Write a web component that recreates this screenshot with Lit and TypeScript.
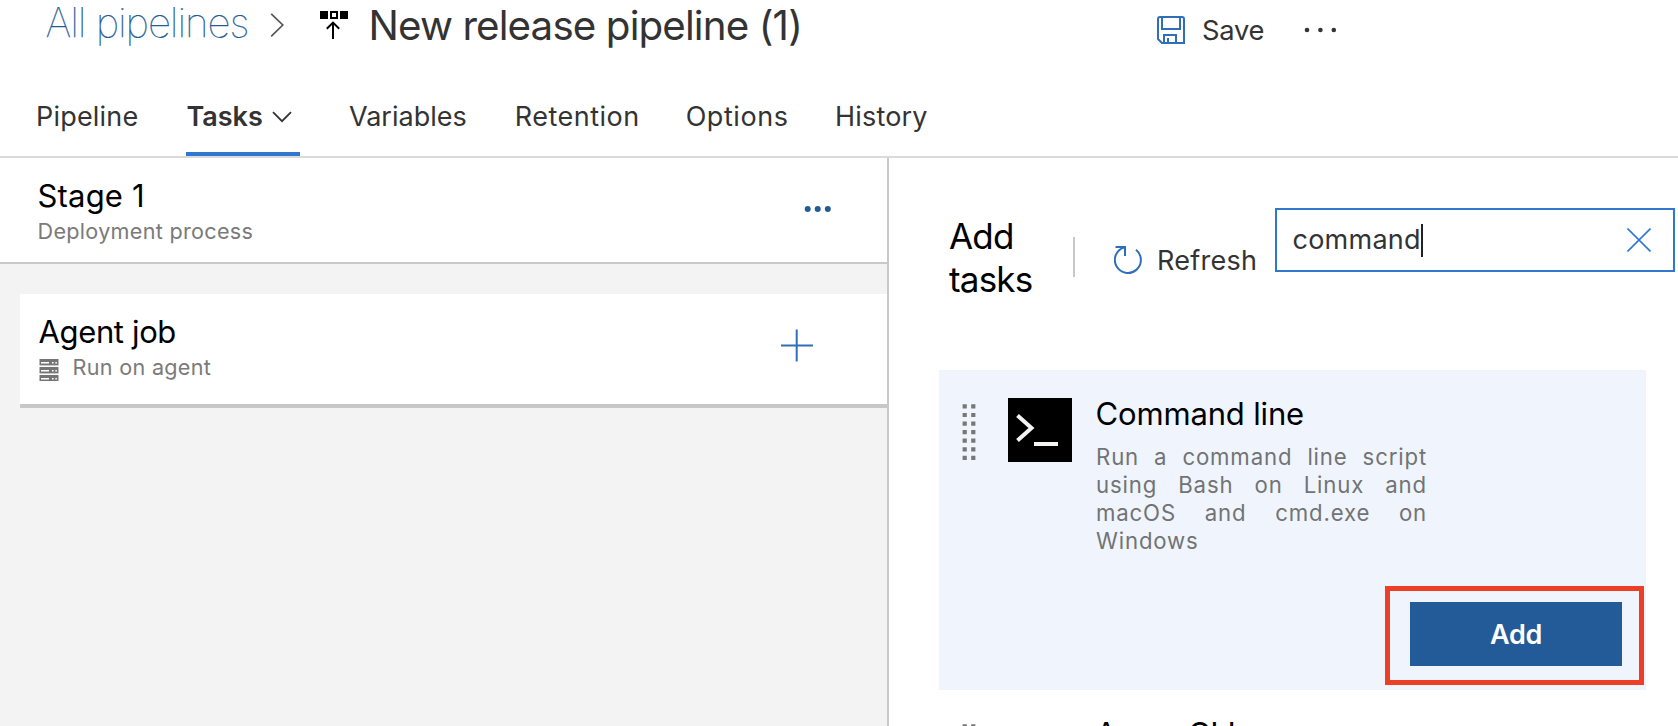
import { LitElement, html, css, svg } from "lit";
import { customElement } from "lit/decorators.js";

const TABS = [
  { id: "pipeline", label: "Pipeline" },
  { id: "tasks", label: "Tasks", active: true },
  { id: "variables", label: "Variables" },
  { id: "retention", label: "Retention" },
  { id: "options", label: "Options" },
  { id: "history", label: "History" },
];

@customElement("pipeline-header")
class PipelineHeader extends LitElement {
  static styles = css`
    :host { display: block; height: 156px; border-bottom: 2px solid #dadada; color: #333; }
    svg { display: block; flex: none; }
    .top { display: flex; align-items: flex-start; height: 88px; padding-left: 45.5px; white-space: nowrap; }
    .crumb { width: 203.5px; font-size: 40.3px; line-height: 46px; font-weight: 100; letter-spacing: -1.09px; color: #235b98; -webkit-text-stroke: 0.25px #235b98; }
    .sep { margin: 13px 0 0 21px; }
    .logo { margin: 10px 0 0 36px; }
    .title { margin: 0 0 0 19.5px; width: 788px; font-size: 40.3px; line-height: 51px; font-weight: 400; letter-spacing: -0.87px; }
    .save { display: flex; gap: 17.5px; font-size: 27.3px; line-height: 61.5px; letter-spacing: -0.25px; }
    .save svg { margin-top: 16px; }
    .more { margin: 27px 0 0 40px; }
    .tabs { display: flex; gap: 48px; padding-left: 36px; height: 68px; }
    .tab { box-sizing: border-box; display: flex; height: 68px; border-bottom: 4px solid transparent; font-size: 27px; line-height: 57px; letter-spacing: 0.2px; white-space: nowrap; }
    .tab.variables { letter-spacing: 0; margin-left: 0.5px; }
    .tab.retention { letter-spacing: 0.49px; }
    .tab.options { letter-spacing: 0.55px; margin-left: -2px; }
    .tab.history { margin-left: -1.5px; }
    .tab.active { border-color: #3078cf; font-weight: 600; letter-spacing: 0; width: 114px; }
    .tab svg { margin: 23px 0 0 9px; }
  `;
  render() {
    return html`
      <div class="top">
        <span class="crumb">All pipelines</span>
        <svg class="sep" width="14" height="25" viewBox="0 0 14 25" fill="none" stroke="#555" stroke-width="1.7"><path d="M1.2 .8 12.8 12 1.2 23.3" /></svg>
        <svg class="logo" width="29" height="30" viewBox="0 0 29 30">
          <path d="M0 1h8v8H0zM20 1h8v8h-8z" />
          <path d="M11 2h6v6h-6zM13 29V13.5M6.8 18.8 13 12.6l6.2 6.2" fill="none" stroke="#000" stroke-width="2" />
        </svg>
        <h1 class="title">New release pipeline (1)</h1>
        <span class="save">
          <svg width="28" height="28" viewBox="0 0 28 28" fill="none" stroke="#2f6fba" stroke-width="2">
            <path d="M3 1H25Q27 1 27 3V27H5L1 23V3Q1 1 3 1ZM5 1V13H23V1M7 27V19H19V27M11 22V27" />
          </svg>
          <span>Save</span>
        </span>
        <svg class="more" width="34" height="6" viewBox="0 0 34 6" fill="#333"><circle cx="3" cy="3" r="2.3" /><circle cx="16.4" cy="3" r="2.3" /><circle cx="29.8" cy="3" r="2.3" /></svg>
      </div>
      <nav class="tabs">
        ${TABS.map(
          (t) => html`<span class="tab ${t.id} ${t.active ? "active" : ""}">${t.label}${t.active
            ? html`<svg width="20" height="12" viewBox="0 0 20 12" fill="none" stroke="#333" stroke-width="1.8"><path d="M1 1.2 10 10.2 19 1.2" /></svg>`
            : ""}</span>`
        )}
      </nav>
    `;
  }
}

@customElement("stage-panel")
class StagePanel extends LitElement {
  static styles = css`
    :host { display: flex; flex-direction: column; background: #f3f3f3; border-right: 2px solid #c8c8c8; color: #000; }
    svg { display: block; }
    .stage, .job { display: flex; justify-content: space-between; background: #fff; box-sizing: border-box; }
    .stage { height: 106px; padding: 18px 55px 0 37.5px; border-bottom: 2px solid #c8c8c8; }
    .job { height: 114px; margin: 30px 0 0 20px; padding: 17.5px 73px 0 18.5px; border-bottom: 4px solid #c8c8c8; }
    .name { font-size: 31px; line-height: 40px; letter-spacing: 0.18px; }
    .job .name { letter-spacing: -0.36px; }
    .sub { display: flex; font-size: 21.6px; line-height: 30px; letter-spacing: 0.3px; color: #7a7a7a; }
    .sub svg { margin: 7.5px 14px 0 0; }
    .dots { margin-top: 30px; }
    .plus { margin-top: 17.5px; }
  `;
  render() {
    return html`
      <div class="stage">
        <div>
          <div class="name">Stage 1</div>
          <div class="sub">Deployment process</div>
        </div>
        <svg class="dots" width="28" height="6" viewBox="0 0 28 6" overflow="visible" fill="#235b98"><circle cx="3.7" cy="3" r="3" /><circle cx="13.7" cy="3" r="3" /><circle cx="23.8" cy="3" r="3" /></svg>
      </div>
      <div class="job">
        <div>
          <div class="name">Agent job</div>
          <div class="sub">
            <svg width="20" height="22" viewBox="0 0 20 22">
              ${[0, 8, 16].map(
                (y) => svg`<path fill="#757575" d="M.5 ${y}h19v6.4h-19z" /><path fill="#fff" d="M2 ${y + 3}h8v1.5h-8zM13 ${y + 3}h1.6v1.5h-1.6zM16.3 ${y + 3}h1.6v1.5h-1.6z" />`
              )}
            </svg>
            Run on agent
          </div>
        </div>
        <svg class="plus" width="33" height="33" viewBox="0 0 33 33" stroke="#2f6fba" stroke-width="2"><path d="M0 16.5H32M15.7 .5V32.5" /></svg>
      </div>
    `;
  }
}

@customElement("drag-handle")
class DragHandle extends LitElement {
  static styles = css`
    :host { display: block; width: 14px; height: 57px; }
    svg { display: block; }
  `;
  render() {
    return html`<svg width="14" height="57" fill="#777">
      ${[0, 1, 2, 3, 4, 5, 6].map((i) => svg`<path d="M.6 ${i * 8.58 + 0.3}h4.2v4.2H.6zM9.2 ${i * 8.58 + 0.3}h4.2v4.2H9.2z" />`)}
    </svg>`;
  }
}

@customElement("task-catalog")
class TaskCatalog extends LitElement {
  static styles = css`
    :host { display: block; background: #fff; color: #000; overflow: hidden; }
    svg { display: block; flex: none; }
    .bar { display: flex; align-items: flex-start; height: 212px; }
    .heading { margin: 57px 0 0 60px; width: 89.5px; font-size: 35px; line-height: 43px; font-weight: 400; letter-spacing: -0.8px; }
    .rule { width: 2px; height: 40px; margin: 79px 0 0 34.5px; background: #c8c8c8; }
    .refresh { display: flex; flex: none; margin: 73px 0 0 39px; width: 161px; font-size: 27px; line-height: 60px; letter-spacing: 0.26px; color: #333; }
    .refresh svg { margin: 13px 15px 0 0; }
    .search { box-sizing: border-box; display: flex; flex: none; align-items: center; width: 400px; height: 64px; margin-top: 50px; padding: 0 22px 0 15.5px; border: 2px solid #3078cf; font-size: 27px; letter-spacing: 0.24px; line-height: 62px; color: #333; }
    .caret { width: 2px; height: 33px; background: #222; }
    .search svg { margin-left: auto; }
    .card { display: flex; box-sizing: border-box; width: 707px; height: 320px; margin-left: 50px; padding: 28px 0 0 23px; }
    .card.on { background: #f0f5fd; }
    drag-handle { margin-top: 5.5px; }
    .icon { width: 64px; height: 64px; margin: 0 23px 0 32px; }
    .body { width: 550px; display: flex; flex-direction: column; }
    .name { font-size: 31px; line-height: 35px; letter-spacing: -0.16px; margin: -2px 0 1px 0.5px; white-space: nowrap; }
    .cli { letter-spacing: -0.37px; }
    .desc { margin: 10.5px 0 0 1px; width: 331px; font-size: 22.2px; line-height: 28px; letter-spacing: 0.85px; text-align: justify; color: #727375; }
    .frame { box-sizing: border-box; align-self: flex-end; width: 259px; height: 99px; margin: 31.5px 1px 0 0; padding: 11px 0 0 20px; border: 5px solid #ec3f25; }
    .add { width: 212px; height: 64px; background: #235b98; color: #fff; font-size: 27px; line-height: 65px; font-weight: 600; letter-spacing: -0.29px; text-align: center; }
  `;
  render() {
    return html`
      <div class="bar">
        <h2 class="heading">Add tasks</h2>
        <i class="rule"></i>
        <span class="refresh">
          <svg width="28" height="30" viewBox="0 0 28 30" fill="none" stroke="#2f6fba" stroke-width="2"><path d="M1.5 3H11V12M9.8 3.6A13 13 0 1 0 22 5.8" /></svg>
          Refresh
        </span>
        <div class="search">
          command<i class="caret"></i>
          <svg width="24" height="24" viewBox="0 0 24 24" stroke="#3078cf" stroke-width="1.6"><path d="M.5.5 23.5 23.5M23.5.5.5 23.5" /></svg>
        </div>
      </div>
      <div class="card on">
        <drag-handle></drag-handle>
        <svg class="icon" viewBox="0 0 64 64">
          <path d="M0 0h64v64H0z" />
          <path d="M9.5 17.5 23.5 30 9.5 42.5M26 46H50" fill="none" stroke="#f4f4f4" stroke-width="4" />
        </svg>
        <div class="body">
          <div class="name">Command line</div>
          <div class="desc">Run a command line script using Bash on Linux and macOS and cmd.exe on Windows</div>
          <div class="frame"><div class="add">Add</div></div>
        </div>
      </div>
      <div class="card">
        <drag-handle></drag-handle>
        <div class="icon"></div>
        <div class="body"><div class="name cli">Azure CLI</div></div>
      </div>
    `;
  }
}

@customElement("app-root")
class AppRoot extends LitElement {
  static styles = css`
    :host { display: flex; flex-direction: column; height: 726px; overflow: hidden; background: #fff; font-family: Inter, "Liberation Sans", sans-serif; }
    .main { flex: 1; min-height: 0; display: grid; grid-template-columns: 889px 1fr; }
    .main > * { min-height: 0; }
  `;
  render() {
    return html`
      <pipeline-header></pipeline-header>
      <div class="main">
        <stage-panel></stage-panel>
        <task-catalog></task-catalog>
      </div>
    `;
  }
}
